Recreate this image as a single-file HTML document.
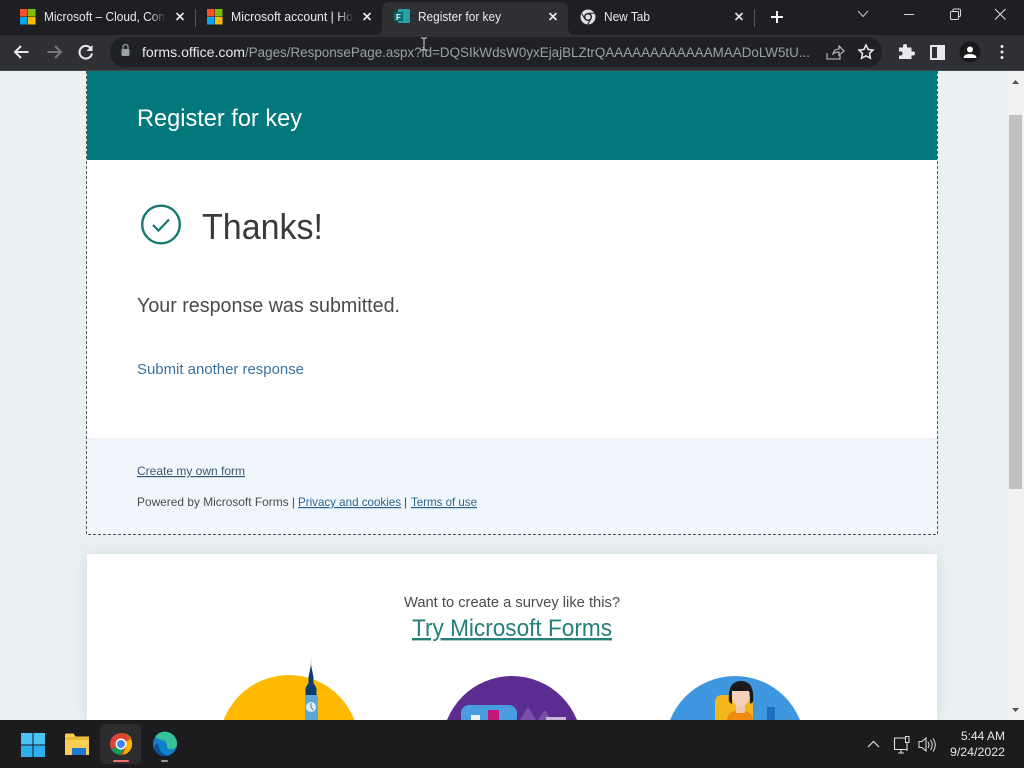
<!DOCTYPE html>
<html><head><meta charset="utf-8"><title>Register for key</title>
<style>
html,body{margin:0;padding:0;width:1024px;height:768px;overflow:hidden;background:#e9f1f3}
svg{display:block;position:absolute;left:0;top:0}
text{font-family:"Liberation Sans",sans-serif}
</style></head><body>
<svg width="1024" height="768" viewBox="0 0 1024 768" xmlns="http://www.w3.org/2000/svg">
<defs>
<filter id="sh" x="-5%" y="-20%" width="110%" height="130%"><feGaussianBlur stdDeviation="7"/></filter>
<linearGradient id="fade"><stop offset="0" stop-color="#1e1f22" stop-opacity="0"/><stop offset="1" stop-color="#1e1f22"/></linearGradient>
<g id="ms"><rect x="0" y="0" width="7.5" height="7.5" fill="#f35325"/><rect x="8" y="0" width="7.5" height="7.5" fill="#81bc06"/><rect x="0" y="8" width="7.5" height="7.5" fill="#05a6f0"/><rect x="8" y="8" width="7.5" height="7.5" fill="#ffba08"/></g>
</defs>
<rect width="1024" height="768" fill="#e9f1f3"/>
<!-- page -->
<rect x="87" y="71" width="850" height="89" fill="#03787c"/>
<rect x="87" y="160" width="850" height="278" fill="#fff"/>
<rect x="87" y="438" width="850" height="96" fill="#f1f6fc"/>
<rect x="87" y="438" width="850" height="4" fill="#eef4f7"/>
<path d="M86.500 71V534.500H937.500V71" fill="none" stroke="#555" stroke-width="1" stroke-dasharray="3 2"/>
<text x="137" y="126" font-size="24" fill="#fff" textLength="165" lengthAdjust="spacingAndGlyphs">Register for key</text>
<circle cx="161" cy="224.500" r="18.800" fill="none" stroke="#167a70" stroke-width="2.400"/>
<path d="M153 225l5.500 5.500 10.500-11" fill="none" stroke="#167a70" stroke-width="2.200"/>
<text x="202" y="239" font-size="36" fill="#3b3b3b" textLength="121" lengthAdjust="spacingAndGlyphs">Thanks!</text>
<text x="137" y="312" font-size="20" fill="#4a4a4a" textLength="263" lengthAdjust="spacingAndGlyphs">Your response was submitted.</text>
<text x="137" y="374" font-size="15" fill="#3a72a2" textLength="167" lengthAdjust="spacingAndGlyphs">Submit another response</text>
<text x="137" y="475" font-size="12" fill="#3d5874" text-decoration="underline" textLength="108" lengthAdjust="spacingAndGlyphs">Create my own form</text>
<text x="137" y="506" font-size="12" fill="#4a4a4a" textLength="158" lengthAdjust="spacingAndGlyphs">Powered by Microsoft Forms |</text>
<text x="298" y="506" font-size="12" fill="#2b6592" text-decoration="underline" textLength="103" lengthAdjust="spacingAndGlyphs">Privacy and cookies</text>
<text x="404" y="506" font-size="12" fill="#4a4a4a">|</text>
<text x="411" y="506" font-size="12" fill="#2b6592" text-decoration="underline" textLength="66" lengthAdjust="spacingAndGlyphs">Terms of use</text>
<!-- card -->
<rect x="87" y="554" width="850" height="166" fill="#b9c9cc" opacity=".55" filter="url(#sh)"/>
<rect x="87" y="554" width="850" height="166" fill="#fff"/>
<text x="404" y="607" font-size="14.500" fill="#4a4a4a" textLength="216" lengthAdjust="spacingAndGlyphs">Want to create a survey like this?</text>
<text x="412" y="636" font-size="24" fill="#24807b" text-decoration="underline" textLength="200" lengthAdjust="spacingAndGlyphs">Try Microsoft Forms</text>
<!-- illustrations -->
<circle cx="289" cy="745" r="70" fill="#ffb900"/>
<path d="M311 657l1 12h-2z" fill="#ccd"/>
<path d="M311 665l2.500 12v6l3 5v32h-11v-32l3-5v-6z" fill="#0f3c6e"/>
<rect x="305" y="695" width="13" height="25" fill="#5ba7d8"/>
<circle cx="311" cy="707" r="5" fill="#dcecf6"/>
<path d="M311 703v4l2 3" fill="none" stroke="#33668c" stroke-width=".8"/>
<circle cx="512" cy="746" r="70" fill="#5c2d91"/>
<rect x="403" y="0" width="0" height="0"/>
<rect x="403" y="0" width="0" height="0"/>
<rect x="403" y="0" width="0" height="0"/>
<rect x="461" y="705" width="56" height="20" rx="8" fill="#4a9ce0"/>
<rect x="471" y="715" width="9" height="8" fill="#e8f0f8"/>
<rect x="488" y="710" width="11" height="12" fill="#c2187a"/>
<path d="M520 720l8-13 8 13zM538 720l7-10 6 10z" fill="#7a4fa8"/>
<rect x="546" y="717" width="20" height="5" fill="#c8b8d8"/>
<circle cx="735" cy="746" r="70" fill="#3f97e0"/>
<rect x="715" y="695" width="38" height="30" rx="7" fill="#f3b71e"/>
<rect x="767" y="707" width="8" height="15" fill="#1f6fc0"/>
<path d="M726 722q2-10 9-11h10q7 1 9 11z" fill="#f08a12"/>
<rect x="736" y="703" width="9" height="10" fill="#f2c7a8"/>
<path d="M729 702q-2-21 12-21t12 21l-3 2v-12h-18v12z" fill="#1a1a1a"/>
<path d="M732 691h17v8q-3 8-8.500 8t-8.500-8z" fill="#f4d2bb"/>
<!-- scrollbar -->
<rect x="1007" y="71" width="17" height="649" fill="#f1f1f1"/>
<rect x="1009" y="115" width="13" height="374" fill="#c1c1c1"/>
<path d="M1012 84l3.500-4 3.500 4z" fill="#505050"/>
<path d="M1012 708l3.500 4 3.500-4z" fill="#505050"/>
<!-- tab strip -->
<rect width="1024" height="35" fill="#1e1f22"/>
<rect y="35" width="1024" height="35" fill="#2f3033"/>
<rect y="70" width="1024" height="1" fill="#46474a"/>
<path d="M374 35q8 0 8-8V10q0-8 8-8h170q8 0 8 8v17q0 8 8 8z" fill="#2f3033"/>
<use href="#ms" x="20" y="9"/>
<text x="44" y="21" font-size="12.500" fill="#e8eaed" textLength="121" lengthAdjust="spacingAndGlyphs">Microsoft – Cloud, Con</text>
<rect x="150" y="8" width="16" height="18" fill="url(#fade)"/>
<path d="M176.500 13l7 7m0-7l-7 7" stroke="#e8eaed" stroke-width="1.600"/>
<rect x="195" y="9" width="1" height="18" fill="#55565a"/>
<use href="#ms" x="207" y="9"/>
<text x="231" y="21" font-size="12.500" fill="#e8eaed" textLength="122" lengthAdjust="spacingAndGlyphs">Microsoft account | Ho</text>
<rect x="338" y="8" width="16" height="18" fill="url(#fade)"/>
<path d="M363.500 13l7 7m0-7l-7 7" stroke="#e8eaed" stroke-width="1.600"/>
<rect x="398" y="9" width="12" height="14" rx="1" fill="#27a1a5"/>
<rect x="394" y="12" width="9" height="9" fill="#0a6a6e"/>
<text x="396" y="20" font-size="8" font-weight="bold" fill="#fff">F</text>
<text x="418" y="21" font-size="12.500" fill="#e8eaed" textLength="83" lengthAdjust="spacingAndGlyphs">Register for key</text>
<path d="M549.500 13l7 7m0-7l-7 7" stroke="#e8eaed" stroke-width="1.600"/>
<circle cx="588" cy="17" r="7.500" fill="#dfe1e4"/>
<circle cx="588" cy="17" r="4" fill="#1e1f22"/>
<circle cx="588" cy="17" r="2.600" fill="#dfe1e4"/>
<path d="M588 13.300h6.500M584.800 19l-3-5.500M590.800 19l-3.300 5.500" stroke="#1e1f22" stroke-width="1" fill="none"/>
<text x="604" y="21" font-size="12.500" fill="#e8eaed" textLength="46" lengthAdjust="spacingAndGlyphs">New Tab</text>
<path d="M735.500 13l7 7m0-7l-7 7" stroke="#e8eaed" stroke-width="1.600"/>
<rect x="754" y="9" width="1" height="18" fill="#55565a"/>
<path d="M771 17h12M777 11v12" stroke="#f1f3f4" stroke-width="2"/>
<path d="M858 11l5 5.500 5-5.500" fill="none" stroke="#c8c8c8" stroke-width="1"/>
<rect x="904" y="14" width="10" height="1" fill="#d8d8d8"/>
<rect x="950.500" y="11.500" width="8" height="8" rx="1" fill="none" stroke="#d8d8d8"/>
<path d="M953 11.500v-1.500q0-1 1-1h5q1.500 0 1.500 1.500v5q0 1-1 1h-1" fill="none" stroke="#d8d8d8"/>
<path d="M995 9l10.500 10.500m0-10.500L995 19.500" stroke="#e0e0e0" stroke-width="1"/>
<!-- toolbar -->
<path d="M28.500 52h-13M21 46l-6 6 6 6" fill="none" stroke="#e8eaed" stroke-width="2"/>
<path d="M47.500 52h13M55 46l6 6-6 6" fill="none" stroke="#77787b" stroke-width="2"/>
<path d="M91.500 49.500a6.300 6.300 0 1 0 .5 4" fill="none" stroke="#e8eaed" stroke-width="2"/>
<path d="M92.500 45v6h-6z" fill="#e8eaed"/>
<rect x="110" y="37" width="772" height="30" rx="15" fill="#202124"/>
<rect x="121.500" y="49" width="8" height="7" rx="1" fill="#9aa0a6"/>
<path d="M123 49v-2a2.500 2.500 0 0 1 5 0v2" fill="none" stroke="#9aa0a6" stroke-width="1.200"/>
<text x="142" y="57" font-size="13.500" fill="#e8eaed" textLength="103" lengthAdjust="spacingAndGlyphs">forms.office.com</text>
<text x="245" y="57" font-size="13.500" fill="#9aa0a6" textLength="565" lengthAdjust="spacingAndGlyphs">/Pages/ResponsePage.aspx?id=DQSIkWdsW0yxEjajBLZtrQAAAAAAAAAAAAMAADoLW5tU...</text>
<path d="M827 53v6h13v-4M833 54q1-5 6-5v-3l5 5-5 4v-3q-4 0-6 2z" fill="none" stroke="#c4c6c9" stroke-width="1.100"/>
<path d="M866 45l2.200 4.500 4.800.6-3.500 3.300.9 4.800-4.400-2.400-4.400 2.400.9-4.800-3.500-3.300 4.800-.6z" fill="none" stroke="#e8eaed" stroke-width="1.500"/>
<path d="M899 49h4v-1.500a2 2 0 0 1 4 0V49h4.500v4h1.500a2 2 0 0 1 0 4h-1.500v3.500H899v-3.500h1.500a2 2 0 0 0 0-4H899z" fill="#e8eaed" transform="translate(0 -1.500)"/>
<rect x="931" y="46" width="13" height="13" fill="none" stroke="#e8eaed" stroke-width="2"/>
<rect x="937" y="46" width="7" height="13" fill="#e8eaed"/>
<circle cx="970" cy="52" r="10.500" fill="#18191b"/>
<circle cx="970" cy="49.500" r="3" fill="#fff"/>
<path d="M963.500 58q0-4 6.500-4t6.500 4z" fill="#fff"/>
<circle cx="1002" cy="46.500" r="1.500" fill="#e8eaed"/><circle cx="1002" cy="52" r="1.500" fill="#e8eaed"/><circle cx="1002" cy="57.500" r="1.500" fill="#e8eaed"/>
<path d="M421 38h2l1 1 1-1h2M424 39v10M421 50h2l1-1 1 1h2" fill="none" stroke="#d8d8d8" stroke-width="1"/>
<!-- taskbar -->
<rect y="720" width="1024" height="48" fill="#1c1c1e"/>
<rect x="21" y="733" width="11.500" height="11.500" fill="#4cc2f5"/><rect x="33.500" y="733" width="11.500" height="11.500" fill="#4cc2f5"/><rect x="21" y="745.500" width="11.500" height="11.500" fill="#2fb0ee"/><rect x="33.500" y="745.500" width="11.500" height="11.500" fill="#2fb0ee"/>
<path d="M65 735q0-1.500 1.500-1.500h7l2 3h13.500v18.500H65z" fill="#f7cf52"/>
<rect x="65" y="737" width="24" height="3" fill="#e9b93a"/>
<rect x="72" y="748" width="14" height="7" fill="#1f78d1"/>
<rect x="100" y="724" width="41" height="40" rx="4" fill="#2c2c2e"/>
<circle cx="121" cy="744" r="11" fill="#db4437"/>
<path d="M121 744l-9.500 5.500A11 11 0 0 0 121 755l5-11z" fill="#0f9d58"/>
<path d="M121 733a11 11 0 0 1 9.500 16.500L121 744l10.500-5.500A11 11 0 0 0 121 733z" fill="#f4b400"/>
<path d="M131 739a11 11 0 0 1-8 15.800L127 744z" fill="#f4b400"/>
<circle cx="121" cy="744" r="5.500" fill="#fff"/>
<circle cx="121" cy="744" r="4" fill="#4285f4"/>
<rect x="113" y="760" width="16" height="2" rx="1" fill="#e8776a"/>
<circle cx="165" cy="744" r="12" fill="#1280c8"/>
<path d="M155 737a12 12 0 0 1 22 7q0 5-6 5-5 0-4-4 0-4-5-5-4-1-7-3z" fill="#35c29a"/>
<path d="M159 746q0 7 8 9.500-7 2-11-3-3-5 0-9z" fill="#0b4f94"/>
<rect x="161" y="760" width="7" height="2" rx="1" fill="#9a9a9a"/>
<path d="M868 747l5.500-5.500 5.500 5.500" fill="none" stroke="#e0e0e0" stroke-width="1.200"/>
<path d="M906 738h-11.500v11.500H907V744M898 753h6M901 750v3" fill="none" stroke="#e0e0e0" stroke-width="1.100"/>
<rect x="905.500" y="736.500" width="3.500" height="6" fill="none" stroke="#e0e0e0"/>
<path d="M907 743v8" stroke="#e0e0e0"/>
<path d="M919 741.500h3l4-3.500v13l-4-3.500h-3zM928 742q2 3 0 6M930.500 740q3.500 5 0 10M933 738.500q4.500 6.500 0 13" fill="none" stroke="#e0e0e0" stroke-width="1"/>
<text x="1005" y="740" font-size="12" fill="#e8e8e8" text-anchor="end" textLength="44" lengthAdjust="spacingAndGlyphs">5:44 AM</text>
<text x="1005" y="756" font-size="12" fill="#e8e8e8" text-anchor="end" textLength="55" lengthAdjust="spacingAndGlyphs">9/24/2022</text>
</svg>
</body></html>
